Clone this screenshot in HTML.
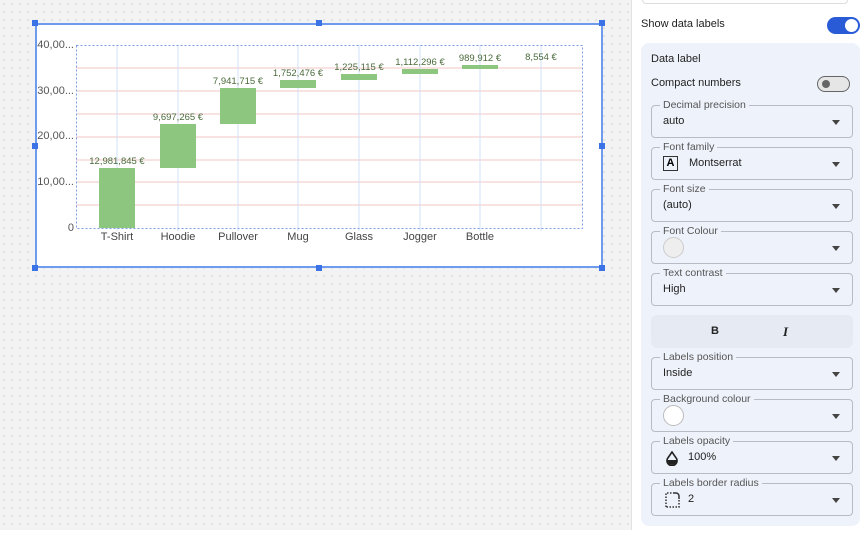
<!DOCTYPE html>
<html><head><meta charset="utf-8"><style>
*{box-sizing:border-box;margin:0;padding:0}
body{width:862px;height:536px;position:relative;overflow:hidden;background:#fff;font-family:"Liberation Sans",sans-serif;}
.canvas{position:absolute;left:0;top:0;width:632px;height:530px;background-color:#f3f3f3;background-image:radial-gradient(circle,#e0e0e0 0.8px,transparent 1.2px);background-size:8px 8px;border-right:1px solid #e2e2e2}
.card{position:absolute;left:35px;top:23px;width:568px;height:245px;background:#fff;border:2px solid #6f9bef}
.h{position:absolute;width:6px;height:6px;background:#3b73e6}
.a{position:absolute}
.yl{position:absolute;font-size:11px;color:#555;text-align:right;width:40px}
.xl{position:absolute;font-size:11px;color:#444;width:60px;text-align:center;top:231px}
.bar{position:absolute;background:#8cc67f;width:36px}
.lb{position:absolute;font-size:9.5px;color:#4a6a3a;width:80px;text-align:center}
.panel{position:absolute;left:641px;top:43px;width:219px;height:483px;background:#eef2fa;border-radius:8px}
.t{position:absolute;font-size:11px;color:#222}
.f{position:absolute;left:651px;width:202px;height:33px;border:1px solid #b8bcc4;border-radius:4px}
.f .lab{position:absolute;left:8px;top:-7px;background:#eef2fa;padding:0 3px;font-size:10.5px;color:#555}
.f .v{position:absolute;left:11px;top:9px;font-size:11px;color:#222}
.f .ar{position:absolute;right:12px;top:14px;width:0;height:0;border-left:4.5px solid transparent;border-right:4.5px solid transparent;border-top:5px solid #444}
</style></head><body>
<div class="canvas"></div>
<div class="card"></div>
<div class="h" style="left:32px;top:20px"></div><div class="h" style="left:316px;top:20px"></div><div class="h" style="left:599px;top:20px"></div>
<div class="h" style="left:32px;top:143px"></div><div class="h" style="left:599px;top:143px"></div>
<div class="h" style="left:32px;top:265px"></div><div class="h" style="left:316px;top:265px"></div><div class="h" style="left:599px;top:265px"></div>
<svg class="a" style="left:0;top:0" width="632" height="300">
<g stroke="#f3c6c6" stroke-width="1">
<line x1="76" x2="582" y1="68" y2="68"/><line x1="76" x2="582" y1="91" y2="91"/><line x1="76" x2="582" y1="114" y2="114"/><line x1="76" x2="582" y1="137" y2="137"/><line x1="76" x2="582" y1="160" y2="160"/><line x1="76" x2="582" y1="182" y2="182"/><line x1="76" x2="582" y1="205" y2="205"/></g>
<g stroke="#cfe0f7" stroke-width="1">
<line x1="117" x2="117" y1="45" y2="231"/><line x1="178" x2="178" y1="45" y2="231"/><line x1="238" x2="238" y1="45" y2="231"/><line x1="298" x2="298" y1="45" y2="231"/><line x1="359" x2="359" y1="45" y2="231"/><line x1="420" x2="420" y1="45" y2="231"/><line x1="480" x2="480" y1="45" y2="231"/><line x1="541" x2="541" y1="45" y2="231"/></g>
<rect x="76.5" y="45.5" width="506" height="183" fill="none" stroke="#7a9ae8" stroke-dasharray="2,2"/>
</svg>
<div class="yl" style="left:34px;top:39px">40,00...</div>
<div class="yl" style="left:34px;top:85px">30,00...</div>
<div class="yl" style="left:34px;top:130px">20,00...</div>
<div class="yl" style="left:34px;top:176px">10,00...</div>
<div class="yl" style="left:34px;top:222px">0</div>
<div class="bar" style="left:99px;top:168px;height:60px"></div>
<div class="bar" style="left:160px;top:124px;height:44px"></div>
<div class="bar" style="left:220px;top:88px;height:36px"></div>
<div class="bar" style="left:280px;top:80px;height:8px"></div>
<div class="bar" style="left:341px;top:74px;height:6px"></div>
<div class="bar" style="left:402px;top:69px;height:5px"></div>
<div class="bar" style="left:462px;top:65px;height:4px"></div>
<div class="lb" style="left:77px;top:156px">12,981,845 €</div>
<div class="lb" style="left:138px;top:112px">9,697,265 €</div>
<div class="lb" style="left:198px;top:76px">7,941,715 €</div>
<div class="lb" style="left:258px;top:68px">1,752,476 €</div>
<div class="lb" style="left:319px;top:62px">1,225,115 €</div>
<div class="lb" style="left:380px;top:57px">1,112,296 €</div>
<div class="lb" style="left:440px;top:53px">989,912 €</div>
<div class="lb" style="left:501px;top:52px">8,554 €</div>
<div class="xl" style="left:87px">T-Shirt</div><div class="xl" style="left:148px">Hoodie</div><div class="xl" style="left:208px">Pullover</div><div class="xl" style="left:268px">Mug</div><div class="xl" style="left:329px">Glass</div><div class="xl" style="left:390px">Jogger</div><div class="xl" style="left:450px">Bottle</div>

<div class="a" style="left:642px;top:0;width:206px;height:4px;border:1px solid #ddd;border-top:none;border-radius:0 0 4px 4px"></div>
<div class="t" style="left:641px;top:18px">Show data labels</div>
<div class="a" style="left:827px;top:17px;width:33px;height:17px;border-radius:9px;background:#2a5bd7"></div>
<div class="a" style="left:845px;top:19px;width:13px;height:13px;border-radius:50%;background:#fff"></div>
<div class="panel"></div>
<div class="t" style="left:651px;top:53px;color:#222">Data label</div>
<div class="t" style="left:651px;top:77px">Compact numbers</div>
<div class="a" style="left:817px;top:76px;width:33px;height:16px;border-radius:8px;border:1.5px solid #666;background:#e6e6e6"></div>
<div class="a" style="left:822px;top:80px;width:8px;height:8px;border-radius:50%;background:#666"></div>

<div class="f" style="top:105px"><span class="lab">Decimal precision</span><span class="v">auto</span><i class="ar"></i></div>
<div class="f" style="top:147px"><span class="lab">Font family</span><span class="a" style="left:11px;top:8px;width:15px;height:15px;border:1.5px solid #333;font-size:11px;font-weight:bold;text-align:center;line-height:12px">A</span><span class="v" style="left:37px">Montserrat</span><i class="ar"></i></div>
<div class="f" style="top:189px"><span class="lab">Font size</span><span class="v">(auto)</span><i class="ar"></i></div>
<div class="f" style="top:231px"><span class="lab">Font Colour</span><span class="a" style="left:11px;top:5px;width:21px;height:21px;border-radius:50%;border:1px solid #ccc;background:#eee"></span><i class="ar"></i></div>
<div class="f" style="top:273px"><span class="lab">Text contrast</span><span class="v">High</span><i class="ar"></i></div>
<div class="a" style="left:651px;top:315px;width:202px;height:33px;border-radius:6px;background:#e6eaf2"></div>
<div class="t" style="left:711px;top:325px;font-weight:bold">B</div>
<div class="t" style="left:783px;top:324px;font-style:italic;font-family:'Liberation Serif',serif;font-size:13px;font-weight:bold">I</div>
<div class="f" style="top:357px"><span class="lab">Labels position</span><span class="v">Inside</span><i class="ar"></i></div>
<div class="f" style="top:399px"><span class="lab">Background colour</span><span class="a" style="left:11px;top:5px;width:21px;height:21px;border-radius:50%;border:1px solid #bbb;background:#fff"></span><i class="ar"></i></div>
<div class="f" style="top:441px"><span class="lab">Labels opacity</span><svg class="a" style="left:13px;top:9px" width="14" height="15" viewBox="0 0 14 15"><path d="M7 1L2.5 7.5A5 5 0 1 0 11.5 7.5Z" fill="none" stroke="#222" stroke-width="1.6"/><path d="M2 9h10a5 5 0 0 1-10 0z" fill="#222"/></svg><span class="v" style="left:36px">100%</span><i class="ar"></i></div>
<div class="f" style="top:483px"><span class="lab">Labels border radius</span><svg class="a" style="left:13px;top:8px" width="16" height="16" viewBox="0 0 16 16"><path d="M1 15V1H8" fill="none" stroke="#333" stroke-width="1.5" stroke-dasharray="1.5,1.5"/><path d="M8 1h3a3 3 0 0 1 3 3v3" fill="none" stroke="#333" stroke-width="1.5"/><path d="M14 8v7H1" fill="none" stroke="#333" stroke-width="1.5" stroke-dasharray="1.5,1.5"/></svg><span class="v" style="left:36px">2</span><i class="ar"></i></div>
</body></html>
